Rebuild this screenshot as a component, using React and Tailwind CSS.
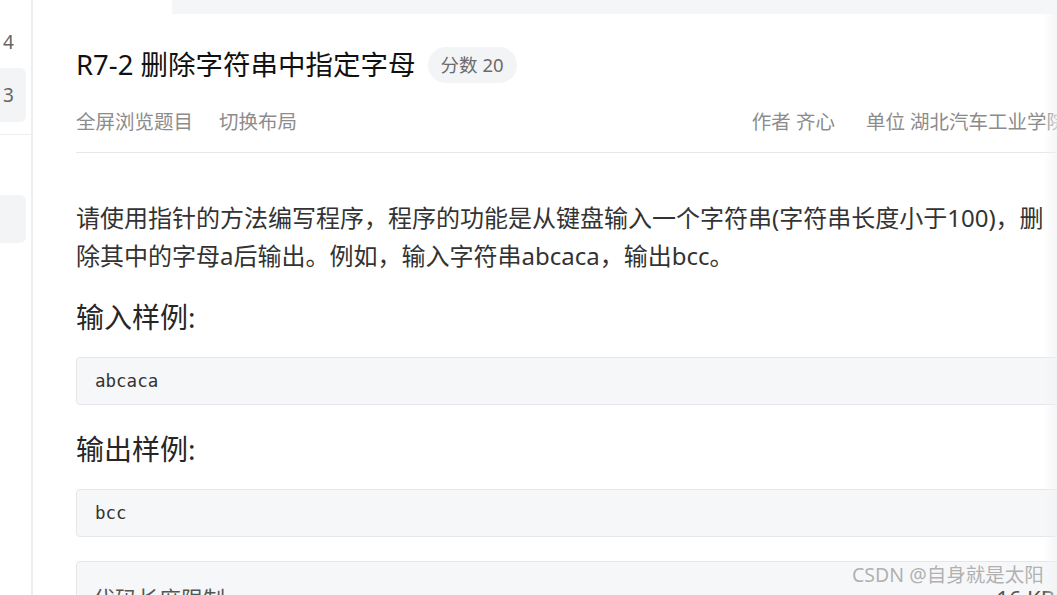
export default function App() {
  const sans = { fontFamily: '"Noto Sans", "Noto Sans CJK SC", sans-serif' };
  const mono = { fontFamily: '"DejaVu Sans Mono", monospace' };

  return (
    <div
      className="relative flex h-[595px] w-[1057px] overflow-hidden bg-white"
      style={sans}
    >
      {/* left nav strip, mostly scrolled out of view */}
      <aside className="flex w-[33px] shrink-0 flex-col border-r-2 border-[#eeeeee] text-[19px] text-[#666666]">
        <div className="mt-[28px] flex h-[28px] items-center pl-[3px] leading-none">4</div>
        <div className="mt-[12px] flex h-[54px] w-[26px] items-center rounded-r-md bg-[#f3f4f6] pl-[3px] leading-none">
          3
        </div>
        <div className="mt-[12px] h-px w-full bg-[#eeeeee]" />
        <div className="mt-[60px] h-[48px] w-[26px] rounded-r-md bg-[#f3f4f6]" />
        <div className="mt-[16px] -ml-[16px] text-[16px] leading-none text-[#33415c]">表</div>
      </aside>

      <main className="flex min-w-0 flex-1 flex-col overflow-hidden">
        <div className="ml-[139px] h-[14px] shrink-0 bg-[#f5f6f8]" />

        <div className="flex w-[1033px] shrink-0 flex-col pl-[43px]">
          {/* title */}
          <div className="mt-[33px] flex h-[36px] items-center gap-[12px]">
            <h1 className="whitespace-nowrap text-[27.5px] font-normal leading-none text-[#111111]">
              R7-2 删除字符串中指定字母
            </h1>
            <span className="flex h-[36px] items-center whitespace-nowrap rounded-full bg-[#f3f4f6] px-[13px] text-[18.5px] text-[#6b6b6b]">
              分数 20
            </span>
          </div>

          {/* meta row */}
          <div className="mt-[24px] flex h-[30px] items-center text-[19.5px] text-[#8c8c8c]">
            <div className="flex gap-[26px]">
              <span>全屏浏览题目</span>
              <span>切换布局</span>
            </div>
            <div className="ml-auto flex gap-[31px]">
              <span>作者 齐心</span>
              <span className="whitespace-nowrap">单位 湖北汽车工业学院</span>
            </div>
          </div>
          <div className="mt-[15px] h-px w-full bg-[#e8e8e8]" />

          {/* description */}
          <p className="mt-[46px] w-[980px] text-[24px] leading-[37.5px] text-[#333333]">
            请使用指针的方法编写程序，程序的功能是从键盘输入一个字符串(字符串长度小于100)，删除其中的字母a后输出。例如，输入字符串abcaca，输出bcc。
          </p>

          <h2 className="mt-[22px] text-[28px] font-normal leading-[42px] text-[#262626]">
            输入样例:
          </h2>
          <pre
            className="mt-[19px] h-[48px] rounded border border-[#e4e6ea] bg-[#f6f7f9] pl-[18px] text-[17.5px] leading-[46px] text-[#333333]"
            style={mono}
          >
            abcaca
          </pre>

          <h2 className="mt-[23px] text-[28px] font-normal leading-[42px] text-[#262626]">
            输出样例:
          </h2>
          <pre
            className="mt-[19px] h-[48px] rounded border border-[#e4e6ea] bg-[#f6f7f9] pl-[18px] text-[17.5px] leading-[46px] text-[#333333]"
            style={mono}
          >
            bcc
          </pre>

          {/* limits box */}
          <div className="mt-[24px] flex h-[80px] justify-between rounded border border-[#e4e6ea] bg-[#f6f7f9] pl-[16px] pr-[10px] pt-[20px] text-[22px] text-[#555555]">
            <span>代码长度限制</span>
            <span>16 KB</span>
          </div>
        </div>
      </main>

      {/* faint edge shade on the right */}
      <div className="pointer-events-none absolute right-0 top-[14px] h-[581px] w-[14px] bg-gradient-to-r from-transparent to-[#f2f2f2]/70" />

      {/* watermark */}
      <div className="pointer-events-none absolute left-[852px] top-[561px] text-[19.5px] leading-[28px] text-[#a8a8a8]/90">
        CSDN @自身就是太阳
      </div>
    </div>
  );
}
